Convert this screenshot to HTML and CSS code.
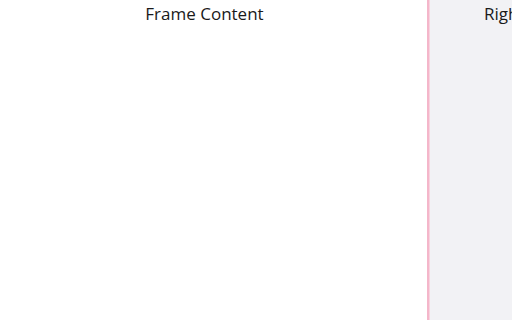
FILE: index.html
```html
<!DOCTYPE html>
<html>
<head>
<meta charset="utf-8">
<link rel="stylesheet" href="styles.css">
</head>
<body>
<div class="layout">
  <div class="frame">
    <div class="frame-title">Frame Content</div>
  </div>
  <div class="divider"></div>
  <div class="right">
    <div class="right-title">Right Pane</div>
  </div>
</div>
</body>
</html>
```
FILE: styles.css
```css
html, body {
  margin: 0;
  padding: 0;
  width: 512px;
  height: 320px;
  overflow: hidden;
  font-family: "Open Sans", "Noto Sans", sans-serif;
  color: #1a1a1a;
}
.layout {
  display: flex;
  height: 320px;
}
.frame {
  width: 427px;
  flex: none;
  background: #ffffff;
}
.frame-title {
  width: 409px;
  text-align: center;
  font-size: 17px;
  line-height: 25px;
  padding-top: 1px;
}
.divider {
  width: 3px;
  flex: none;
  background: #f4b6ca;
  border-right: 1px solid #f8d2de;
  box-sizing: border-box;
}
.right {
  flex: 1;
  background: #f2f2f5;
  overflow: hidden;
  white-space: nowrap;
}
.right-title {
  padding-left: 54px;
  font-size: 17px;
  line-height: 25px;
  padding-top: 1px;
}
```
